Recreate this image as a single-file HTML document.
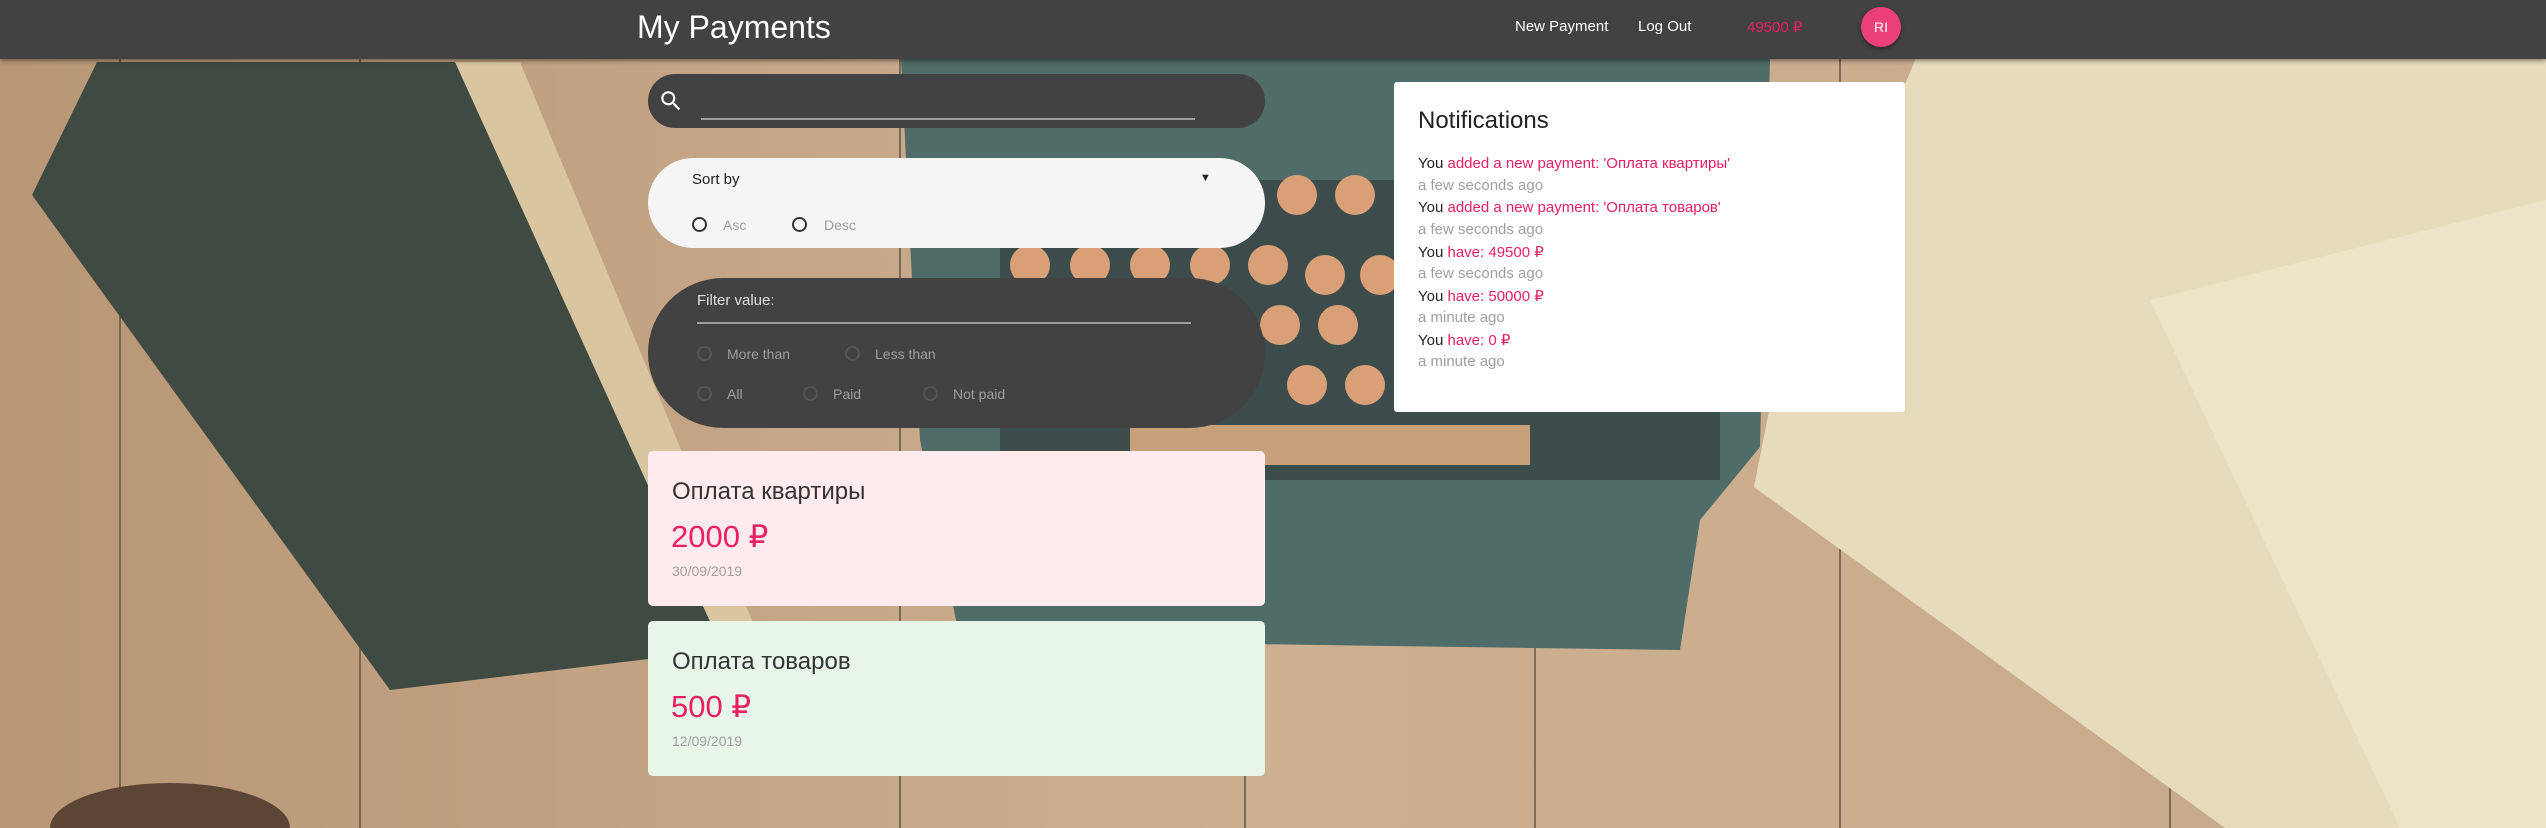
<!DOCTYPE html>
<html><head><meta charset="utf-8"><style>
*{margin:0;padding:0;box-sizing:border-box}
html,body{width:2546px;height:828px;overflow:hidden}
body{position:relative;font-family:"Liberation Sans","Noto Sans CJK SC",sans-serif;background:#c4a686}
.bg{position:absolute;left:0;top:0}
.nav{position:absolute;left:0;top:0;width:2546px;height:59px;background:#424242;box-shadow:0 2px 4px rgba(0,0,0,.4)}
.abs{position:absolute;white-space:nowrap}
.pill{position:absolute;border-radius:60px}
.radio{position:absolute;width:15px;height:15px;border-radius:50%;border:2px solid #555}
.card{position:absolute;left:648px;width:617px;height:155px;border-radius:5px}
.n{position:absolute;left:1418px;font-size:15px;white-space:nowrap}
.p{color:#e91e63}.g{color:#9e9e9e}.k{color:#222}
</style></head><body>
<svg class="bg" width="2546" height="828" viewBox="0 0 2546 828">
<defs><linearGradient id="w" x1="0" x2="1"><stop offset="0" stop-color="#b89676"/><stop offset=".5" stop-color="#cdb090"/><stop offset="1" stop-color="#c6a98a"/></linearGradient></defs>
<rect width="2546" height="828" fill="url(#w)"/>
<g stroke="#4a4038" stroke-width="2" opacity=".6">
<line x1="120" y1="0" x2="120" y2="828"/><line x1="360" y1="0" x2="360" y2="828"/><line x1="900" y1="0" x2="900" y2="828"/><line x1="1245" y1="0" x2="1245" y2="828"/><line x1="1535" y1="0" x2="1535" y2="828"/><line x1="1840" y1="0" x2="1840" y2="828"/><line x1="2170" y1="0" x2="2170" y2="828"/><line x1="2480" y1="0" x2="2480" y2="828"/></g>
<polygon points="440,62 520,62 760,640 700,660" fill="#d9c6a0"/>
<polygon points="97,62 455,62 723,650 390,690 32,195" fill="#3f4b42"/>
<polygon points="901,58 1770,58 1760,447 1700,520 1680,650 960,640 920,440" fill="#4f6c69"/>
<rect x="1000" y="180" width="720" height="300" fill="#3c4c4b"/>
<g fill="#d9a077"><circle cx="1297" cy="195" r="20"/><circle cx="1355" cy="195" r="20"/><circle cx="1030" cy="265" r="20"/><circle cx="1090" cy="265" r="20"/><circle cx="1150" cy="265" r="20"/><circle cx="1210" cy="265" r="20"/><circle cx="1268" cy="265" r="20"/><circle cx="1325" cy="275" r="20"/><circle cx="1380" cy="275" r="20"/><circle cx="1280" cy="325" r="20"/><circle cx="1338" cy="325" r="20"/><circle cx="1307" cy="385" r="20"/><circle cx="1365" cy="385" r="20"/></g>
<rect x="1130" y="425" width="400" height="40" fill="#c8a07c"/>
<polygon points="1916,58 2546,58 2546,828 2225,828 1754,487 1770,406" fill="#e6dcbb"/>
<polygon points="2150,300 2546,200 2546,828 2400,828" fill="#ece4c6"/>
<ellipse cx="170" cy="828" rx="120" ry="45" fill="#5b4636"/>
</svg>
<div class="nav"></div>
<div class="abs" style="left:637px;top:9px;font-size:32px;color:#fff">My Payments</div>
<div class="abs" style="left:1515px;top:18px;font-size:15px;color:#fff">New Payment</div>
<div class="abs" style="left:1638px;top:18px;font-size:15px;color:#fff">Log Out</div>
<div class="abs" style="left:1747px;top:18px;font-size:15px;color:#e91e63">49500 ₽</div>
<div class="abs" style="left:1861px;top:7px;width:40px;height:40px;border-radius:50%;background:#ec407a;color:#fff;font-size:14px;line-height:40px;text-align:center;box-shadow:0 2px 4px rgba(0,0,0,.4)">RI</div>

<div class="pill" style="left:648px;top:74px;width:617px;height:54px;background:#424242"></div>
<svg class="abs" style="left:658px;top:88px" width="26" height="26" viewBox="0 0 24 24"><path fill="#fff" d="M15.5 14h-.79l-.28-.27A6.470 6.470 0 0016 9.5 6.5 6.5 0 109.5 16c1.61 0 3.09-.59 4.23-1.57l.27.28v.79l5 4.99L20.49 19l-4.99-5zm-6 0C7.01 14 5 11.99 5 9.5S7.01 5 9.5 5 14 7.01 14 9.5 11.99 14 9.5 14z"/></svg>
<div class="abs" style="left:701px;top:118px;width:494px;height:2px;background:#9e9e9e"></div>

<div class="pill" style="left:648px;top:158px;width:617px;height:90px;background:#f5f5f5;border-radius:46px"></div>
<div class="abs" style="left:692px;top:171px;font-size:15px;color:#222">Sort by</div>
<div class="abs" style="left:1200px;top:172px;font-size:11px;color:#222">▼</div>
<div class="radio" style="left:692px;top:217px;border-color:#333"></div>
<div class="abs" style="left:723px;top:217px;font-size:14px;color:#9e9e9e">Asc</div>
<div class="radio" style="left:792px;top:217px;border-color:#333"></div>
<div class="abs" style="left:824px;top:217px;font-size:14px;color:#9e9e9e">Desc</div>

<div class="pill" style="left:648px;top:278px;width:617px;height:150px;background:#424242;border-radius:75px"></div>
<div class="abs" style="left:697px;top:292px;font-size:15px;color:#e0e0e0">Filter value:</div>
<div class="abs" style="left:697px;top:322px;width:494px;height:2px;background:#9e9e9e"></div>
<div class="radio" style="left:697px;top:346px"></div><div class="abs" style="left:727px;top:346px;font-size:14px;color:#9e9e9e">More than</div>
<div class="radio" style="left:845px;top:346px"></div><div class="abs" style="left:875px;top:346px;font-size:14px;color:#9e9e9e">Less than</div>
<div class="radio" style="left:697px;top:386px"></div><div class="abs" style="left:727px;top:386px;font-size:14px;color:#9e9e9e">All</div>
<div class="radio" style="left:803px;top:386px"></div><div class="abs" style="left:833px;top:386px;font-size:14px;color:#9e9e9e">Paid</div>
<div class="radio" style="left:923px;top:386px"></div><div class="abs" style="left:953px;top:386px;font-size:14px;color:#9e9e9e">Not paid</div>

<div class="abs" style="left:1394px;top:82px;width:511px;height:330px;background:#fff;border-radius:3px"></div>
<div class="abs" style="left:1418px;top:107px;font-size:24px;color:#222">Notifications</div>
<div class="n" style="top:155px"><span class="k">You</span> <span class="p">added a new payment: 'Оплата квартиры'</span></div>
<div class="n g" style="top:177px">a few seconds ago</div>
<div class="n" style="top:199px"><span class="k">You</span> <span class="p">added a new payment: 'Оплата товаров'</span></div>
<div class="n g" style="top:221px">a few seconds ago</div>
<div class="n" style="top:243px"><span class="k">You</span> <span class="p">have: 49500 ₽</span></div>
<div class="n g" style="top:265px">a few seconds ago</div>
<div class="n" style="top:287px"><span class="k">You</span> <span class="p">have: 50000 ₽</span></div>
<div class="n g" style="top:309px">a minute ago</div>
<div class="n" style="top:331px"><span class="k">You</span> <span class="p">have: 0 ₽</span></div>
<div class="n g" style="top:353px">a minute ago</div>

<div class="card" style="top:451px;background:#ffebee"></div>
<div class="abs" style="left:672px;top:478px;font-size:24px;color:#333">Оплата квартиры</div>
<div class="abs" style="left:671px;top:519px;font-size:31px;color:#e91e63">2000 ₽</div>
<div class="abs" style="left:672px;top:563px;font-size:14px;color:#9e9e9e">30/09/2019</div>
<div class="card" style="top:621px;background:#e8f5e9"></div>
<div class="abs" style="left:672px;top:648px;font-size:24px;color:#333">Оплата товаров</div>
<div class="abs" style="left:671px;top:689px;font-size:31px;color:#e91e63">500 ₽</div>
<div class="abs" style="left:672px;top:733px;font-size:14px;color:#9e9e9e">12/09/2019</div>
</body></html>
